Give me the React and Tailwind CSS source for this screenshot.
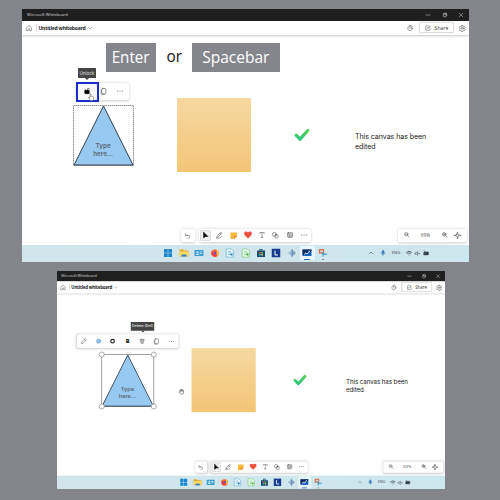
import React from 'react';

function Icon({ children, className = 'size-[6px]', sw = 1.4, stroke = 'currentColor' }) {
  return (
    <svg viewBox="0 0 16 16" className={`shrink-0 overflow-visible ${className}`} fill="none" stroke={stroke} strokeWidth={sw} strokeLinecap="round" strokeLinejoin="round">
      {children}
    </svg>
  );
}

const Copy = () => (
  <Icon className="size-[7px]"><rect x="4" y="1" width="9.500" height="12" rx="2" /><path d="M2.500 4v8.500q0 2.500 2.500 2.500h5" /></Icon>
);
const Dots = () => (
  <Icon><g fill="currentColor" stroke="none"><circle cx="2" cy="8" r="1.500" /><circle cx="8" cy="8" r="1.500" /><circle cx="14" cy="8" r="1.500" /></g></Icon>
);
const Cell = ({ w, children }) => <div className={`flex shrink-0 items-center justify-center ${w}`}>{children}</div>;

function TitleBar() {
  return (
    <div className="flex h-[11.500px] shrink-0 items-center bg-[#1f1f1f] pl-[5px] text-[#d4d4d4]">
      <span className="text-[4.150px] leading-none tracking-[-0.070px] whitespace-nowrap">Microsoft Whiteboard</span>
      <div className="ml-auto flex items-center">
        <Cell w="w-[16.300px]"><Icon className="size-[4px]" sw={2}><path d="M0 8h16" /></Icon></Cell>
        <Cell w="w-[16.300px]"><Icon className="size-[4px]" sw={2.400}><rect x="1" y="4" width="11" height="11" rx="2" /><path d="M5 1h7q3 0 3 3v7" /></Icon></Cell>
        <Cell w="w-[16.300px]"><Icon className="size-[4px]" sw={2}><path d="M1 1l14 14M15 1L1 15" /></Icon></Cell>
      </div>
    </div>
  );
}

function Header() {
  return (
    <div className="relative z-10 flex h-[14.500px] shrink-0 items-center bg-white pl-[3.500px] text-[#505050] shadow-[0_0.500px_2px_rgba(0,0,0,0.220)]">
      <Icon><path d="M1.500 7L8 1l6.500 6v8h-4.500v-5h-4v5H1.500z" /></Icon>
      <div className="ml-[4px] h-[8px] w-[0.500px] bg-[#ddd]" />
      <span className="ml-[2.500px] pt-[1px] text-[5px] leading-none font-bold tracking-[-0.200px] whitespace-nowrap text-[#222]">Untitled whiteboard</span>
      <Icon className="ml-[2.300px] size-[4px]" sw={1.600}><path d="M1 5l7 7 7-7" /></Icon>
      <div className="ml-auto flex items-center pr-[3.300px]">
        <Icon><circle cx="8" cy="9" r="6" /><path d="M8 5.500v4M6 1h4M13 3l1.500 1.500" /></Icon>
        <div className="ml-[6px] flex h-[11px] w-[35.500px] items-center justify-center gap-[4px] rounded-[1px] border-[0.500px] border-[#ddd] shadow-[0_0_1px_rgba(0,0,0,0.200)]">
          <Icon><path d="M7 2H4Q2 2 2 4v8q0 2 2 2h8q2 0 2-2v-2M5 10q1-5 6-5M10 1l4 4-4 4" /></Icon>
          <span className="pt-[1px] text-[5.100px] leading-none text-[#333]">Share</span>
        </div>
        <Icon className="ml-[5px] size-[6.500px]"><circle cx="8" cy="8" r="2.500" /><path d="M6.500 1h3l.6 2.200 1.400.8 2.200-.6 1.500 2.600-1.600 1.600v1.800l1.600 1.600-1.500 2.600-2.200-.6-1.400.8-.6 2.200h-3l-.6-2.200-1.400-.8-2.200.6L.8 11l1.600-1.600V7.600L.8 6l1.500-2.600 2.200.6 1.400-.8z" /></Icon>
      </div>
    </div>
  );
}

const panel = 'absolute flex items-center rounded-[2px] bg-white text-[#505050] shadow-[0_0.500px_3px_rgba(0,0,0,0.200)]';

function BottomTools() {
  return (
    <>
      <div className={`${panel} top-[193.500px] left-[158.500px] h-[13.500px] w-[14px] justify-center`}>
        <Icon className="size-[5.500px]" sw={1.600}><path d="M2 2v5h5M2 7h8q4 0 4 4t-4 4H8" /></Icon>
      </div>
      <div className={`${panel} top-[193.500px] left-[176.500px] h-[13.500px] w-[112px]`}>
        <Cell w="w-[14px]"><div className="flex h-[11.500px] w-[11.500px] items-center justify-center rounded-[1px] border-[0.500px] border-[#ddd] bg-[#efefef] text-black"><Icon className="size-[6.500px]"><path fill="currentColor" d="M4 1v14l4-4h6z" /></Icon></div></Cell>
        <Cell w="w-[14px]"><Icon className="size-[6.500px]"><path d="M3 10L11 1.500q3-1 3 2L6 11.500 2.500 13zM1 15h8l5-4M9 4l3 2" /></Icon></Cell>
        <Cell w="w-[14px]"><Icon className="size-[7.500px]" stroke="none"><path fill="#f9b93f" d="M1 1h14v8l-6 6H1z" /><path fill="#ef7634" d="M15 9l-6 6V9z" /></Icon></Cell>
        <Cell w="w-[14px]"><Icon className="size-[8px]" stroke="none"><path fill="#ed523e" d="M8 15L1 8C-1 4 1 1 4 1q3 0 4 2 1-2 4-2c3 0 5 3 3 7z" /></Icon></Cell>
        <Cell w="w-[14px]"><Icon><path d="M2 4V1.500h12V4M8 1.500v13M5.500 14.500h5" /></Icon></Cell>
        <Cell w="w-[14px]"><Icon className="size-[6.500px]"><circle cx="6" cy="6" r="5" /><rect x="7" y="7" width="8" height="8" rx="2" /></Icon></Cell>
        <Cell w="w-[14px]"><Icon><rect x="1.500" y="1.500" width="13" height="13" rx="2" /><path d="M1.500 5h13M5 5v9.500M8 8h4v4H8z" /></Icon></Cell>
        <Cell w="w-[14px]"><Dots /></Cell>
      </div>
      <div className={`${panel} top-[193.500px] left-[376px] h-[13px] w-[68.500px]`}>
        <Cell w="w-[18px]"><Icon className="size-[5.500px]" sw={1.600}><circle cx="6.500" cy="6.500" r="5" /><path d="M10.500 10.500L15 15M4 6.500h5" /></Icon></Cell>
        <Cell w="w-[19px]"><span className="text-[4.800px] leading-none">69%</span></Cell>
        <Cell w="w-[18.500px]"><Icon className="size-[5.500px]" sw={1.600}><circle cx="6.500" cy="6.500" r="5" /><path d="M10.500 10.500L15 15M4 6.500h5M6.500 4v5" /></Icon></Cell>
        <Cell w="w-[8px]"><Icon className="size-[7px]" sw={1.300}><rect x="5" y="5" width="6" height="6" rx="1" /><path d="M8 1v3M8 12v3M1 8h3M12 8h3M6.500 2L8 .5 9.500 2M6.500 14L8 15.500 9.500 14M2 6.500L.5 8 2 9.500M14 6.500L15.500 8 14 9.500" /></Icon></Cell>
      </div>
    </>
  );
}

const appIcons = [
  <g key="start"><path fill="#1685cf" d="M0 0h7.500v7.500H0zM8.500 0H16v7.500H8.500zM0 8.500h7.500V16H0zM8.500 8.500H16V16H8.500z" /></g>,
  <g key="files"><path fill="#e5a91f" d="M-1 1h7l2 2h9v12H-1z" /><path fill="#ffda62" d="M-1 5h18v9H-1z" /><path fill="#2485c8" d="M3 11h10v4H3z" /></g>,
  <g key="contact"><rect x="-1" y="2" width="18" height="12" rx="1" fill="#3e9dd2" /><circle cx="5" cy="6.500" r="2" fill="#d8f2fb" /><path fill="#d8f2fb" d="M2 12q0-3 3-3t3 3zM9.500 5h5v1.500h-5zM9.500 8h5v1.500h-5z" /></g>,
  <g key="fox"><circle cx="8" cy="8.500" r="7.500" fill="#f7602b" /><path fill="#ffc53a" d="M11 1q5 3 4.500 8T10 15q3-4 1-7z" /><path fill="#f33e48" d="M1 4q-1 9 5 11 5 1 8-3-6 2-8-3z" /><circle cx="8" cy="8" r="3" fill="#7b48bd" /></g>,
  <g key="writer"><path fill="#eefaff" stroke="#3f99bc" d="M1 0h10l4 4v12H1z" /><path stroke="#368fb7" d="M4.500 5h4M4.500 8h8M4.500 11h4" /><path fill="#2483b5" d="M9 9h4v4H9z" /></g>,
  <g key="calc"><path fill="#effff0" stroke="#57b948" d="M1 0h10l4 4v12H1z" /><path stroke="#55b54b" d="M4.500 5h4M4.500 8h8M4.500 11h4" /><path fill="#46aa3e" d="M9 9h4v4H9z" /></g>,
  <g key="store"><path fill="#184c72" d="M0 3h16v13H0zM5 0h6v4H9.500V1.500h-3V4H5z" /><path fill="#e95835" d="M4 6h3.500v3H4z" /><path fill="#80bc45" d="M8.500 6H12v3H8.500z" /><path fill="#35b4e8" d="M4 10h3.500v3H4z" /><path fill="#f3be3c" d="M8.500 10H12v3H8.500z" /></g>,
  <g key="l"><path fill="#173b91" d="M-.5-.5h17v17h-17z" /><path stroke="#fff" strokeWidth="2" d="M6 4v8h5" /></g>,
  <g key="diamond"><path fill="#78a9d2" d="M8 1l8 7-8 7z" /><path fill="#9dbdd6" d="M7 2v12L0 8z" /><path stroke="#506eaf" strokeWidth="1.500" d="M8 1v14" /><path stroke="#c77878" d="M12 5v6" /></g>,
  <g key="board"><path fill="#1761b7" d="M-1 1h18v13H-1z" /><path fill="#102b60" d="M-1 1h18v3L-1 12z" /><path stroke="#fff" strokeWidth="2" d="M3 10q3-4 4-1t6-5" /></g>,
  <g key="snip"><path stroke="#dc6846" strokeWidth="2.500" d="M1 1h8v7H1z" /><path stroke="#3c9dcc" strokeWidth="2.500" d="M8 7v7M8 10h7" /><path stroke="#777" d="M4 4l7 8" /></g>,
];

function Taskbar() {
  return (
    <div className="flex h-[17.500px] shrink-0 items-center bg-gradient-to-r from-[#d2e5eb] to-[#cde7ee] pl-[138.600px] text-[#37434a]">
      {appIcons.map((icon, i) => (
        <div key={i} className={`relative flex h-[14px] w-[15.450px] shrink-0 items-center justify-center ${i === 9 ? 'rounded-[1px] bg-[#e9f5f9]' : ''}`}>
          <Icon className="size-[8px]" sw={1} stroke="none">{icon}</Icon>
          {i === 9 && <div className="absolute bottom-0 h-[1px] w-[6px] rounded-full bg-[#1673bb]" />}
          {i === 10 && <div className="absolute bottom-0 h-[1px] w-[2px] rounded-full bg-[#777]" />}
        </div>
      ))}
      <div className="ml-[39px] flex items-center">
        <Icon className="size-[4px]" sw={2}><path d="M1 11l7-7 7 7" /></Icon>
        <Icon className="ml-[6.300px] size-[6px] text-[#3b77b9]"><rect x="5.500" y="1" width="5" height="9" rx="2.500" fill="currentColor" /><path d="M3 7q0 5 5 5t5-5M8 12v3" /></Icon>
        <span className="ml-[6px] text-[4.200px] leading-none">ENG</span>
        <Icon className="ml-[6px] size-[6px]" sw={2}><path d="M1 6q7-6 14 0M4 9q4-4 8 0M8 13h.1" /></Icon>
        <Icon className="ml-[2.500px] size-[5px]" sw={1.600}><path d="M1 6h3l4-4v12l-4-4H1zM11 6l4 4M15 6l-4 4" /></Icon>
        <Icon className="ml-[3px] size-[6px]"><path fill="currentColor" d="M4 5h10v8H2V8zM15 8v2M3 2l2 3" /></Icon>
      </div>
    </div>
  );
}

function Tooltip({ children, className }) {
  return (
    <div className={`absolute flex flex-col items-center ${className}`}>
      <div className="flex h-[10px] w-full items-center justify-center rounded-[0.500px] bg-[#444] text-[4.600px] leading-none whitespace-nowrap text-[#eee]">{children}</div>
      <div className="h-0 w-0 border-x-[2.500px] border-t-[2.500px] border-x-transparent border-t-[#444]" />
    </div>
  );
}

function LockedOverlay() {
  return (
    <>
      <div className="absolute top-[8px] left-[83.700px] flex items-center text-[16.500px] leading-none">
        <div className="flex h-[28.500px] w-[50px] items-center justify-center bg-[#85868b] text-white"><span className="inline-block scale-x-[0.920]">Enter</span></div>
        <div className="-mt-[2px] w-[36.500px] text-center text-[16.300px] text-[#111]"><span className="inline-block scale-x-[0.940]">or</span></div>
        <div className="flex h-[29px] w-[88px] items-center justify-center bg-[#85868b] text-white"><span className="inline-block scale-x-[0.940]">Spacebar</span></div>
      </div>
      <Tooltip className="top-[33px] left-[56px] w-[17.500px]">Unlock</Tooltip>
      <div className={`${panel} top-[48px] left-[54px] h-[16.500px] w-[52.500px]`}>
        <Cell w="w-[21px]"><Icon className="size-[6px] text-black" sw={1.500}><rect x="2" y="6" width="12" height="9" rx="1.500" fill="currentColor" /><path d="M9 6V4q0-3 3-3 2 0 2.500 2" /></Icon></Cell>
        <Cell w="w-[13px]"><Copy /></Cell>
        <Cell w="w-[19.500px]"><Dots /></Cell>
      </div>
      <div className="absolute top-[47px] left-[53.500px] h-[19.500px] w-[23px] border-2 border-[#1b2dcc] bg-[#00000008]" />
      <svg viewBox="0 0 12 16" className="absolute top-[58px] left-[66px] h-[8px] w-[6px]" fill="#fff" stroke="#666" strokeWidth="1.200"><path d="M4 9V2q1-2 2 0v5q1-2 2 0 1-1 2 0 2 0 1 4l-1 4H5L1 9q0-2 3 0z" /></svg>
    </>
  );
}

function EditingOverlay() {
  return (
    <>
      <Tooltip className="top-[32.500px] left-[85px] w-[27px]"><span className="text-[4.300px] font-semibold">Delete (Del)</span></Tooltip>
      <div className={`${panel} top-[47px] left-[22.500px] h-[16px] w-[117.500px]`}>
        <Cell w="w-[16.800px]"><Icon><path d="M1 15l1-5L11 1q3-1 4 2 0 1-9 11zM10 3l3 3" /></Icon></Cell>
        <Cell w="w-[16.800px]"><Icon><circle cx="8" cy="8" r="6.500" fill="#8fc4ee" stroke="#5a87a7" /></Icon></Cell>
        <Cell w="w-[16.800px]"><Icon sw={3.500}><circle cx="8" cy="8" r="5.500" stroke="#222" /></Icon></Cell>
        <Cell w="w-[16.800px]"><span className="text-[6.500px] leading-none font-extrabold text-[#222]">B</span></Cell>
        <Cell w="w-[16.800px]"><Icon><path d="M1 4h14M5.500 4V1.500h5V4M3 4l1.500 11h7L13 4M6.500 7v5M9.500 7v5" /></Icon></Cell>
        <Cell w="w-[16.800px]"><Copy /></Cell>
        <Cell w="w-[16.800px]"><Dots /></Cell>
      </div>
      <svg viewBox="0 0 16 16" className="absolute top-[109.500px] left-[139.500px] size-[7px]" fill="#fff" stroke="#444" strokeWidth="1.500"><path d="M4 9V3q1-2 2 0V2q1-2 2 0v1q1-2 2 0v1q2-2 3 0v7q-1 4-4 4H7L1 9q0-2 3 0zM6 3v4M8 3v4M10 3v4" /></svg>
    </>
  );
}

function Shape({ editing }) {
  return (
    <div className="absolute top-[69.600px] left-[50.600px] h-[61px] w-[61px]">
      <svg viewBox="0 0 61 61" className="absolute inset-0 overflow-visible" fill="none">
        <rect x=".5" y=".5" width="60" height="60" stroke="#888" strokeWidth=".9" strokeDasharray={editing ? undefined : '1.500 .5'} />
        <path d="M30.500 1L60 60H1z" fill="#97c9f1" stroke="#30404c" strokeWidth="1" />
        {editing && [[0.5, 0.5], [60.5, 0.5], [0.5, 60.5], [60.5, 60.5]].map(([x, y]) => <circle key={`${x}-${y}`} cx={x} cy={y} r="2.900" fill="#fff" stroke="#888" strokeWidth=".8" />)}
      </svg>
      <div className="relative pt-[37.200px] text-center font-['Inter','Open_Sans',sans-serif] text-[6.300px] leading-[8.200px] font-semibold text-[#5c6a74]">Type<br />here...</div>
    </div>
  );
}

function Whiteboard({ editing = false }) {
  return (
    <div className="flex h-[253px] w-[447px] flex-col overflow-hidden bg-white">
      <TitleBar />
      <Header />
      <div className="relative h-[209.500px] shrink-0 bg-white">
        {editing ? <EditingOverlay /> : <LockedOverlay />}
        <Shape editing={editing} />
        <div className="absolute top-[63px] left-[155px] h-[74px] w-[74px] bg-gradient-to-b from-[#f5d8a0] to-[#f3c676]" />
        <svg viewBox="0 0 16 14" className="absolute top-[93px] left-[272px] h-[14px] w-[16px] overflow-visible" fill="none">
          <defs><linearGradient id="tick" x1="0" x2="0" y1="0" y2="1"><stop stopColor="#55cf5c" /><stop offset="1" stopColor="#2fc47d" /></linearGradient></defs>
          <path d="M2.200 7.200l3.800 4 7.800-8.700" stroke="url(#tick)" strokeWidth="3.300" strokeLinecap="round" strokeLinejoin="round" />
        </svg>
        <div className="absolute top-[97.300px] left-[333px] font-['Inter','Liberation_Sans',sans-serif] text-[7.100px] leading-[10px] tracking-[-0.080px] whitespace-nowrap text-[#222]">This canvas has been<br />edited</div>
        <BottomTools />
      </div>
      <Taskbar />
    </div>
  );
}

export default function App() {
  return (
    <div className="flex h-[500px] w-[500px] flex-col overflow-hidden bg-[#84858b] pt-[9px] font-['Open_Sans','Noto_Sans',sans-serif]">
      <div className="ml-[22px] h-[253px] w-[447px] shrink-0"><Whiteboard /></div>
      <div className="mt-[9px] ml-[57px] h-[218px] w-[388px] shrink-0 overflow-hidden">
        <div className="origin-top-left scale-x-[0.868] scale-y-[0.866]"><Whiteboard editing /></div>
      </div>
    </div>
  );
}
